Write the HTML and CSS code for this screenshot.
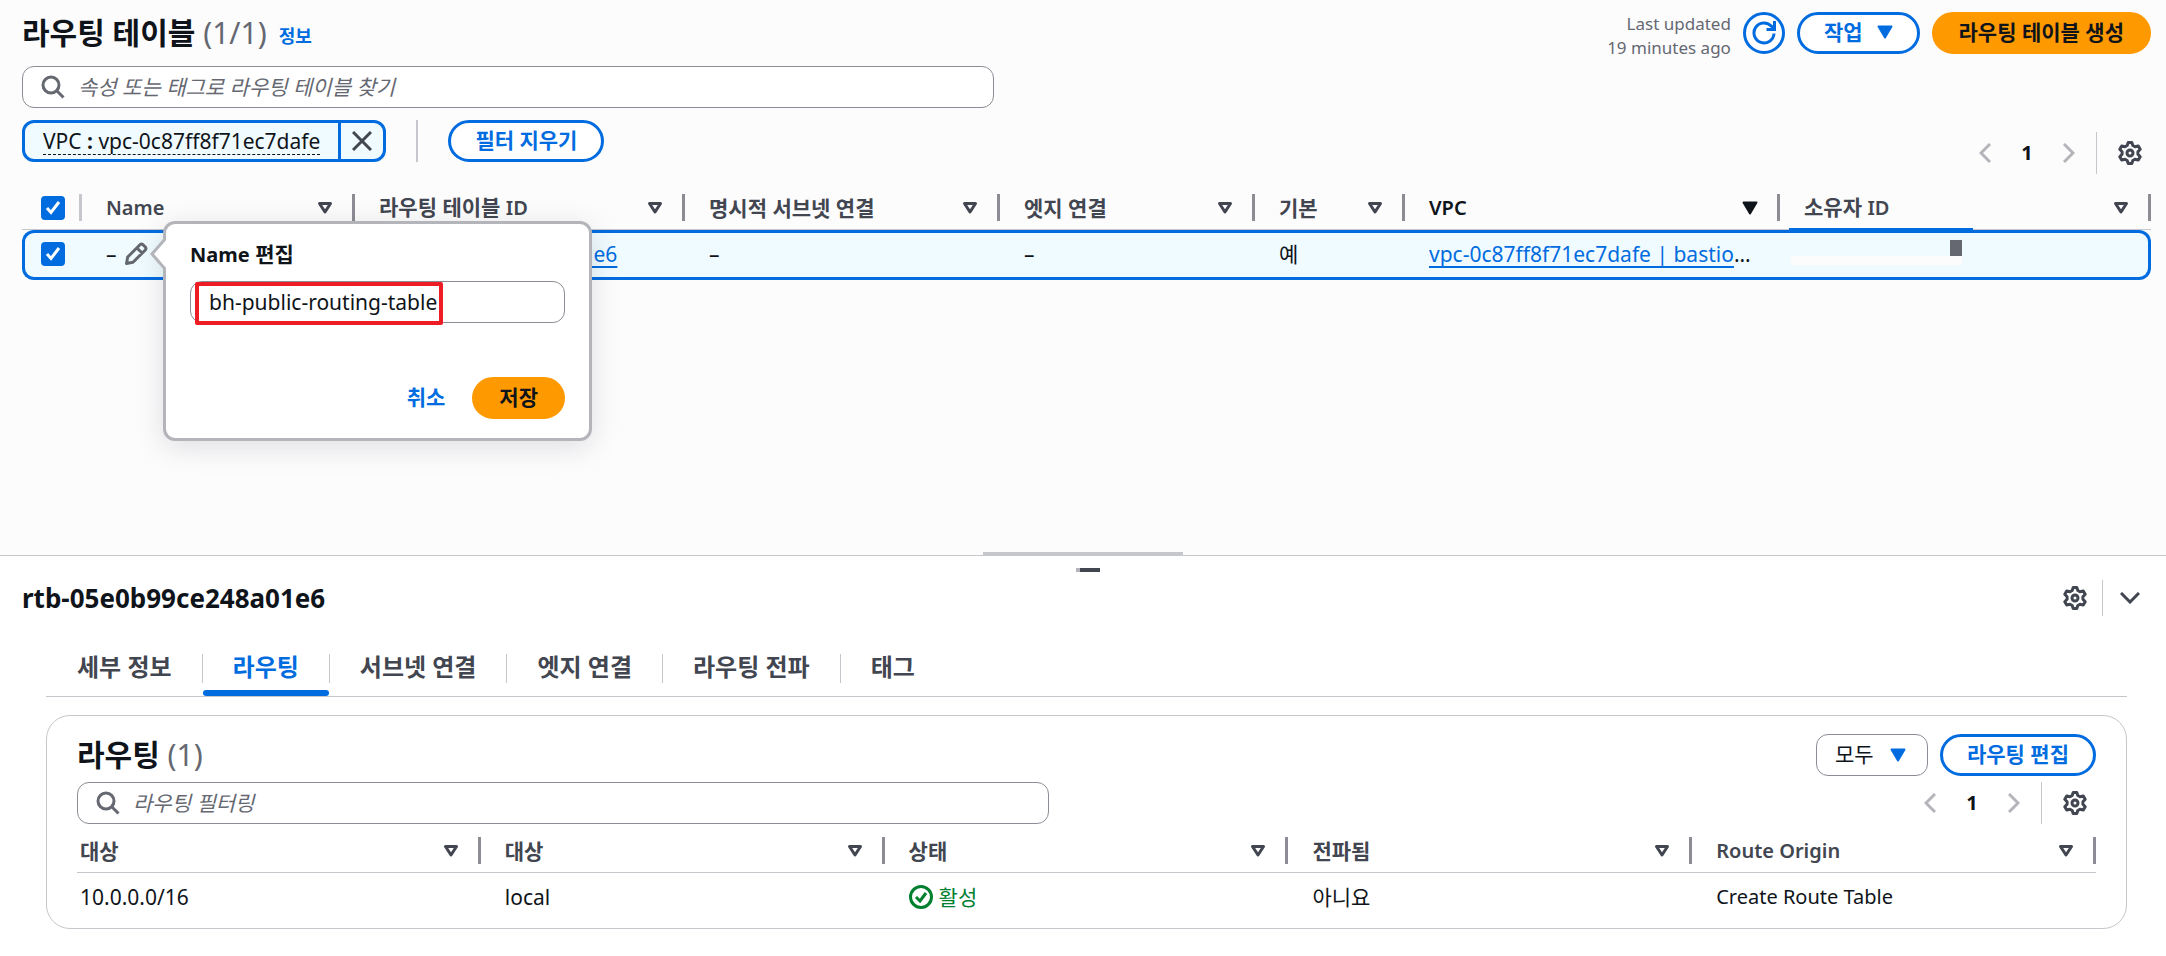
FILE: index.html
```html
<!DOCTYPE html>
<html lang="ko">
<head>
<meta charset="utf-8">
<title>라우팅 테이블</title>
<link rel="stylesheet" href="styles.css">
</head>
<body>
<svg class="sprite" aria-hidden="true">
  <symbol id="gear" viewBox="0 0 24 24"><g fill="none" stroke="currentColor" stroke-width="3" stroke-linejoin="round"><path d="M10.200 1.500h3.600l1 3 2.200 1.200 3.300-.8 1.900 3.300-2.300 2.500v2.600l2.300 2.500-1.900 3.300-3.300-.8-2.200 1.200-1 3h-3.600l-1-3-2.200-1.200-3.300.8-1.900-3.300 2.300-2.500v-2.600l-2.300-2.500 1.900-3.300 3.300.8 2.200-1.200z"/><circle cx="12" cy="12" r="3"/></g></symbol>
  <symbol id="search" viewBox="0 0 24 24"><g fill="none" stroke="currentColor" stroke-width="3"><circle cx="10" cy="10" r="8"/><path d="M15.500 15.500l7 7"/></g></symbol>
  <symbol id="prev" viewBox="0 0 12 20"><path d="M11 1L2 10l9 9" fill="none" stroke="currentColor" stroke-width="3"/></symbol>
  <symbol id="next" viewBox="0 0 12 20"><path d="M1 1l9 9-9 9" fill="none" stroke="currentColor" stroke-width="3"/></symbol>
  <symbol id="sort" viewBox="0 0 16 14"><path d="M2.500 2.500h11L8 11z" fill="none" stroke="currentColor" stroke-width="3" stroke-linejoin="round"/></symbol>
  <symbol id="down" viewBox="0 0 16 14"><path d="M1.500 1.500h13L8 12.500z" fill="currentColor" stroke="currentColor" stroke-width="2" stroke-linejoin="round"/></symbol>
</svg>

<main class="tables">
  <header class="bar">
    <h1 class="title">라우팅 테이블 <span class="count">(1/1)</span></h1>
    <a class="info" href="#">정보</a>
    <p class="updated">Last updated<br>19 minutes ago</p>
    <button class="btn round" type="button" aria-label="새로 고침"><svg width="24" height="26" viewBox="0 0 24 26"><path d="M22 13.500a10 10 0 1 1-2.500-7.200l2.500 2.700M22.500 1v8.500h-8" fill="none" stroke="currentColor" stroke-width="3"/></svg></button>
    <button class="btn" type="button">작업 <svg width="16" height="14"><use href="#down"/></svg></button>
    <button class="btn primary" type="button">라우팅 테이블 생성</button>
  </header>

  <div class="filters">
    <div class="filter-main">
      <label class="search"><svg width="24" height="24"><use href="#search"/></svg><input type="text" aria-label="라우팅 테이블 찾기" placeholder="속성 또는 태그로 라우팅 테이블 찾기"></label>
      <div class="tokens">
        <div class="token"><button class="token-text" type="button"><span>VPC <b>:</b> vpc-0c87ff8f71ec7dafe</span></button><button class="token-x" type="button" aria-label="제거"><svg width="20" height="20" viewBox="0 0 20 20"><path d="M1 1l18 18M19 1L1 19" fill="none" stroke="currentColor" stroke-width="3"/></svg></button></div>
        <span class="rule"></span>
        <button class="btn" type="button">필터 지우기</button>
      </div>
    </div>
    <nav class="pager" aria-label="페이지">
      <button type="button" aria-label="이전"><svg width="12" height="20"><use href="#prev"/></svg></button>
      <button class="page" type="button">1</button>
      <button type="button" aria-label="다음"><svg width="12" height="20"><use href="#next"/></svg></button>
      <button class="gear" type="button" aria-label="설정"><svg width="24" height="24"><use href="#gear"/></svg></button>
    </nav>
  </div>

  <table class="grid route-tables">
    <colgroup><col class="c-check"><col class="c-name"><col class="c-id"><col class="c-subnet"><col class="c-edge"><col class="c-main"><col class="c-vpc"><col></colgroup>
    <thead>
      <tr>
        <th class="pick"><div class="head"><input type="checkbox" checked aria-label="모두 선택"></div></th>
        <th><div class="head"><span class="en">Name</span><svg width="16" height="14"><use href="#sort"/></svg></div></th>
        <th><div class="head"><span>라우팅 테이블 <span class="en">ID</span></span><svg width="16" height="14"><use href="#sort"/></svg></div></th>
        <th><div class="head">명시적 서브넷 연결<svg width="16" height="14"><use href="#sort"/></svg></div></th>
        <th><div class="head">엣지 연결<svg width="16" height="14"><use href="#sort"/></svg></div></th>
        <th><div class="head">기본<svg width="16" height="14"><use href="#sort"/></svg></div></th>
        <th class="sorted"><div class="head"><span class="en">VPC</span><svg width="16" height="14"><use href="#down"/></svg></div></th>
        <th><div class="head"><span>소유자 <span class="en">ID</span></span><svg width="16" height="14"><use href="#sort"/></svg></div></th>
      </tr>
    </thead>
    <tbody>
      <tr>
        <td class="pick"><input type="checkbox" checked aria-label="행 선택"></td>
        <td class="name-cell">
          <div class="name-value">–<button class="icon-btn" type="button" aria-label="Name 편집"><svg width="24" height="24" viewBox="0 0 24 24"><path d="M2.500 21.500l1.200-6.500L16 2.700q1.500-1.200 3 0l2.300 2.300q1.200 1.500 0 3L9 20.300zM13 6l5 5" fill="none" stroke="currentColor" stroke-width="3" stroke-linejoin="round"/></svg></button></div>
          <form class="popover">
            <svg class="arrow" width="16" height="34" viewBox="0 0 16 34"><path d="M16 1L2 17l14 16" fill="#fff" stroke="#b4b4bb" stroke-width="3"/></svg>
            <label for="name"><span class="en">Name</span> 편집</label>
            <div class="field"><input id="name" type="text" value="bh-public-routing-table"><span class="mark"></span></div>
            <div class="actions"><button class="btn link" type="button">취소</button><button class="btn primary" type="button">저장</button></div>
          </form>
        </td>
        <td><a href="#">rtb-05e0b99ce248a01e6</a></td>
        <td>–</td>
        <td>–</td>
        <td>예</td>
        <td><a href="#">vpc-0c87ff8f71ec7dafe | bastio</a>…</td>
        <td class="owner"><span class="owner-line"></span><span class="owner-mask"></span><span class="owner-dot"></span></td>
      </tr>
    </tbody>
  </table>
</main>

<section class="panel">
  <span class="handle"></span><span class="grip"></span>
  <header class="panel-bar">
    <h2 class="panel-title">rtb-05e0b99ce248a01e6</h2>
    <button class="tool" type="button" aria-label="설정"><svg width="24" height="24"><use href="#gear"/></svg></button>
    <span class="panel-rule"></span>
    <button class="tool" type="button" aria-label="닫기"><svg width="20" height="12" viewBox="0 0 20 12"><path d="M1 1l9 9 9-9" fill="none" stroke="currentColor" stroke-width="3"/></svg></button>
  </header>
  <div class="panel-body">
    <nav class="tabs">
      <button type="button">세부 정보</button>
      <button class="active" type="button">라우팅</button>
      <button type="button">서브넷 연결</button>
      <button type="button">엣지 연결</button>
      <button type="button">라우팅 전파</button>
      <button type="button">태그</button>
    </nav>
    <section class="card">
      <header class="card-bar">
        <h2 class="title">라우팅 <span class="count">(1)</span></h2>
        <div class="select"><select aria-label="필터"><option>모두</option></select><svg width="16" height="14"><use href="#down"/></svg></div>
        <button class="btn" type="button">라우팅 편집</button>
      </header>
      <div class="filters">
        <div class="filter-main"><label class="search"><svg width="24" height="24"><use href="#search"/></svg><input type="text" aria-label="라우팅 필터링" placeholder="라우팅 필터링"></label></div>
        <nav class="pager" aria-label="페이지">
          <button type="button" aria-label="이전"><svg width="12" height="20"><use href="#prev"/></svg></button>
          <button class="page" type="button">1</button>
          <button type="button" aria-label="다음"><svg width="12" height="20"><use href="#next"/></svg></button>
          <button class="gear" type="button" aria-label="설정"><svg width="24" height="24"><use href="#gear"/></svg></button>
        </nav>
      </div>
      <table class="grid routes">
        <thead>
          <tr>
            <th><div class="head">대상<svg width="16" height="14"><use href="#sort"/></svg></div></th>
            <th><div class="head">대상<svg width="16" height="14"><use href="#sort"/></svg></div></th>
            <th><div class="head">상태<svg width="16" height="14"><use href="#sort"/></svg></div></th>
            <th><div class="head">전파됨<svg width="16" height="14"><use href="#sort"/></svg></div></th>
            <th><div class="head"><span class="en">Route Origin</span><svg width="16" height="14"><use href="#sort"/></svg></div></th>
          </tr>
        </thead>
        <tbody>
          <tr>
            <td>10.0.0.0/16</td>
            <td>local</td>
            <td><span class="status"><svg width="24" height="24" viewBox="0 0 24 24"><g fill="none" stroke="currentColor" stroke-width="3"><circle cx="12" cy="12" r="10.500"/><path d="M7 12l4 4 6-8"/></g></svg>활성</span></td>
            <td>아니요</td>
            <td><span class="en">Create Route Table</span></td>
          </tr>
        </tbody>
      </table>
    </section>
  </div>
</section>
</body>
</html>
```
FILE: styles.css
```css
* { box-sizing: border-box; }
body {
  margin: 0;
  min-height: 100vh;
  display: flex;
  flex-direction: column;
  background: #fcfcfd;
  color: #0f141a;
  font: 21px/28px "Noto Sans", "Noto Sans CJK KR", sans-serif;
}
button, input, select { font: inherit; color: inherit; margin: 0; }
button { padding: 0; border: 0; background: none; }
svg { display: block; flex: none; }
a { color: #006ce0; text-decoration-thickness: 2px; text-underline-offset: 4px; text-decoration-skip-ink: none; }
h1, h2, p { margin: 0; }
.en { font-size: 20px; }
.sprite { position: absolute; width: 0; height: 0; }

.tables { flex: 1; padding: 12px 15px 0 22px; }
.bar, .card-bar { display: flex; align-items: center; gap: 12px; }
.bar { height: 42px; }
.title { font-size: 30px; line-height: 36px; font-weight: 700; }
.count { font-weight: 400; color: #656871; }
.info { align-self: flex-end; font-size: 18px; line-height: 36px; font-weight: 700; text-decoration: none; }
.updated { align-self: flex-start; margin-left: auto; font-size: 17px; line-height: 24px; text-align: right; color: #656871; }
.btn {
  display: flex;
  align-items: center;
  justify-content: center;
  gap: 14px;
  height: 42px;
  padding: 0 24px 2px;
  border: 3px solid #006ce0;
  border-radius: 21px;
  background: #fff;
  color: #006ce0;
  font-weight: 700;
  white-space: nowrap;
}
.btn.round { width: 42px; padding: 0; }
.btn.primary { border-color: #ff9900; background: #ff9900; color: #0f141a; }
.btn.link { border-color: transparent; background: none; }

.filters { display: flex; justify-content: space-between; align-items: flex-end; }
.tables .filters { margin-top: 12px; }
.filter-main { flex: 1; }
.tables .filter-main { padding-bottom: 12px; }
.search {
  display: flex;
  align-items: center;
  gap: 13px;
  width: 100%;
  max-width: 972px;
  height: 42px;
  padding: 0 18px;
  border: 1px solid #8c8c94;
  border-radius: 12px;
  background: #fff;
  color: #656871;
}
.search input { flex: 1; border: 0; outline: 0; padding: 0; background: none; }
.search input::placeholder { color: #656871; font-style: italic; opacity: 1; }
.tokens { display: flex; align-items: center; margin-top: 12px; }
.token { display: flex; height: 42px; border: 3px solid #006ce0; border-radius: 12px; background: #f0fbff; }
.token-text { padding: 0 18px; }
.token-text span { display: block; line-height: 26px; border-bottom: 1px dashed #0f141a; }
.token-x { display: flex; align-items: center; padding: 0 11px; border-left: 3px solid #006ce0; color: #424650; }
.rule { width: 2px; height: 42px; margin: 0 30px; background: #c6c6cd; }

.pager { display: flex; align-items: center; height: 42px; color: #b4b4bb; }
.pager button { display: flex; align-items: center; justify-content: center; width: 42px; height: 42px; }
.pager .page { color: #0f141a; font-size: 20px; font-weight: 700; }
.pager .gear { width: 55px; margin-left: 6px; padding-left: 12px; border-left: 1px solid #c6c6cd; color: #424650; }

.grid { width: 100%; table-layout: fixed; border-collapse: separate; border-spacing: 0; }
.grid th { padding: 0; border-bottom: 1px solid #c6c6cd; text-align: left; color: #424650; font-weight: 700; }
.grid th .en { font-weight: 600; }
.head { display: flex; align-items: center; justify-content: space-between; height: 27px; padding: 0 19px 0 24px; border-right: 3px solid #8c8c94; line-height: 26px; white-space: nowrap; }
.grid td { padding: 0 24px 2px; white-space: nowrap; }
.grid .sorted { color: #0f141a; }

.route-tables { margin-top: 12px; }
.route-tables th { padding: 8px 0; }
.c-check { width: 60px; }
.c-name { width: 273px; }
.c-id { width: 330px; }
.c-subnet { width: 315px; }
.c-edge { width: 255px; }
.c-main { width: 150px; }
.c-vpc { width: 375px; }
.route-tables td { height: 50px; border: 3px solid #006ce0; border-width: 3px 0; background: #f0fbff; }
.route-tables td:first-child { border-left-width: 3px; border-radius: 12px 0 0 12px; padding: 0 0 2px 16px; }
.route-tables td:last-child { border-right-width: 3px; border-radius: 0 12px 12px 0; }
.pick .head { padding: 0 0 0 19px; border-color: #c6c6cd; }
input[type="checkbox"] {
  appearance: none;
  display: block;
  flex: none;
  width: 24px;
  height: 24px;
  border-radius: 4px;
  background: #006ce0 url("data:image/svg+xml,%3Csvg xmlns='http://www.w3.org/2000/svg' viewBox='0 0 24 24'%3E%3Cpath d='M6 12l4 4.500 8-10.500' fill='none' stroke='%23fff' stroke-width='3'/%3E%3C/svg%3E");
}
.name-cell, .owner { position: relative; }
.name-value { display: flex; align-items: center; gap: 7px; }
.icon-btn { color: #656871; }
.owner-line { position: absolute; left: 9px; top: -5px; width: 184px; height: 4px; background: #006ce0; }
.owner-mask { position: absolute; left: 11px; top: 23px; width: 171px; height: 9px; background: #fcfcfd; }
.owner-dot { position: absolute; left: 170px; top: 7px; width: 12px; height: 16px; background: #656871; }

.popover {
  position: absolute;
  left: 81px;
  top: -12px;
  z-index: 2;
  width: 429px;
  padding: 16px 24px 19px;
  border: 3px solid #b4b4bb;
  border-radius: 12px;
  background: #fff;
  box-shadow: 0 6px 30px rgba(0, 7, 22, .12);
}
.arrow { position: absolute; left: -16px; top: 13px; }
.popover label { display: block; font-weight: 700; }
.field { position: relative; margin-top: 12px; }
.field input { width: 100%; height: 42px; padding: 0 18px; border: 1px solid #8c8c94; border-radius: 12px; background: #fff; }
.mark { position: absolute; left: 5px; top: 1px; width: 248px; height: 43px; border: 4px solid #ee1c25; border-radius: 2px; }
.actions { display: flex; justify-content: flex-end; margin-top: 54px; }

.panel { position: relative; padding-bottom: 27px; border-top: 1px solid #c6c6cd; background: #fff; }
.handle { position: absolute; left: calc(50% - 100px); top: -4px; width: 200px; height: 4px; background: #c6c6cd; }
.grip { position: absolute; left: calc(50% - 7px); top: 12px; width: 24px; height: 4px; border-left: 4px solid #b4b4bb; background: #424650; }
.panel-bar { display: flex; align-items: center; padding: 24px 15px 0 22px; color: #424650; }
.panel-title { flex: 1; color: #0f141a; font-size: 26px; line-height: 36px; font-weight: 700; }
.tool { display: flex; align-items: center; justify-content: center; width: 42px; height: 36px; }
.panel-rule { width: 1px; height: 36px; margin: 0 6px; background: #c6c6cd; }
.panel-body { padding: 26px 39px 0 46px; }
.tabs { display: flex; border-bottom: 1px solid #c6c6cd; }
.tabs button { position: relative; height: 54px; padding: 0 30px 4px 31px; color: #424650; font-size: 24px; font-weight: 700; }
.tabs button + button::before { content: ""; position: absolute; left: 0; top: 12px; width: 1px; height: 29px; background: #c6c6cd; }
.tabs .active { color: #006ce0; }
.tabs .active::after { content: ""; position: absolute; left: 1px; right: 0; bottom: 0; height: 6px; border-radius: 3px; background: #006ce0; }

.card { margin-top: 18px; padding: 18px 30px 0; border: 1px solid #c6c6cd; border-radius: 24px; }
.card-bar .title { flex: 1; }
.card .filters { margin-top: 6px; }
.select { position: relative; }
.select select { appearance: none; width: 112px; height: 42px; padding: 0 18px 2px; border: 1px solid #8c8c94; border-radius: 12px; background: #fff; }
.select svg { position: absolute; right: 22px; top: 14px; color: #006ce0; pointer-events: none; }
.routes th { padding: 13px 0 8px; }
.routes th:first-child .head, .routes td:first-child { padding-left: 3px; }
.routes td { height: 55px; padding-bottom: 8px; }
.status { display: flex; align-items: center; gap: 6px; color: #00802f; }
```
